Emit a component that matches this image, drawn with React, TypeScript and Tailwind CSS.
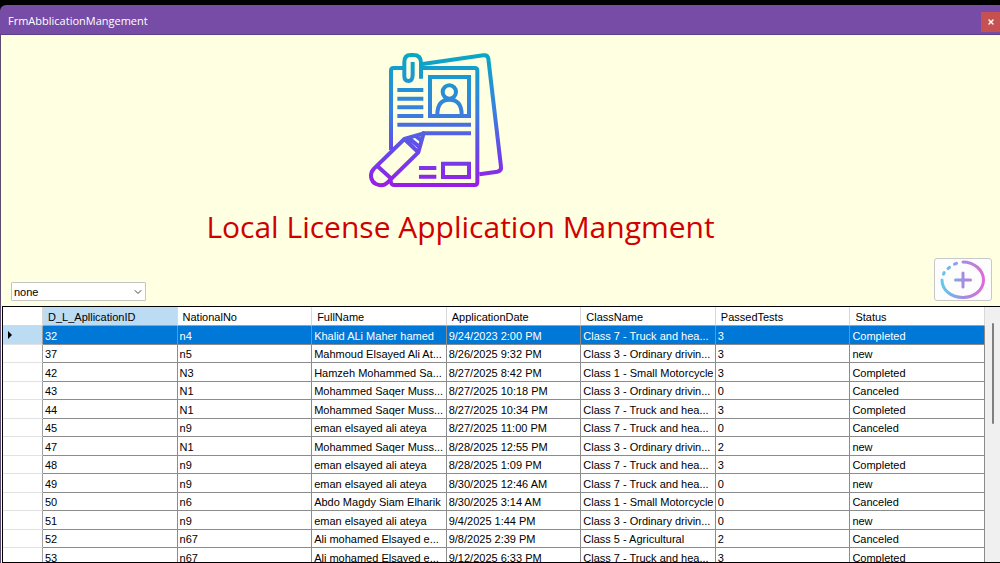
import { ChevronDown, X } from 'lucide-react'
import clsx from 'clsx'

type Application = {
  id: number
  nationalNo: string
  fullName: string
  date: string
  className: string
  passedTests: number
  status: 'new' | 'Completed' | 'Canceled'
}

const columns = [
  'D_L_ApllicationID',
  'NationalNo',
  'FullName',
  'ApplicationDate',
  'ClassName',
  'PassedTests',
  'Status',
]

const truck = 'Class 7 - Truck and hea...'
const ordinary = 'Class 3 - Ordinary drivin...'
const motorcycle = 'Class 1 - Small Motorcycle'

const applications: Application[] = [
  { id: 32, nationalNo: 'n4', fullName: 'Khalid ALi Maher hamed', date: '9/24/2023 2:00 PM', className: truck, passedTests: 3, status: 'Completed' },
  { id: 37, nationalNo: 'n5', fullName: 'Mahmoud Elsayed Ali At...', date: '8/26/2025 9:32 PM', className: ordinary, passedTests: 3, status: 'new' },
  { id: 42, nationalNo: 'N3', fullName: 'Hamzeh Mohammed Sa...', date: '8/27/2025 8:42 PM', className: motorcycle, passedTests: 3, status: 'Completed' },
  { id: 43, nationalNo: 'N1', fullName: 'Mohammed Saqer Muss...', date: '8/27/2025 10:18 PM', className: ordinary, passedTests: 0, status: 'Canceled' },
  { id: 44, nationalNo: 'N1', fullName: 'Mohammed Saqer Muss...', date: '8/27/2025 10:34 PM', className: truck, passedTests: 3, status: 'Completed' },
  { id: 45, nationalNo: 'n9', fullName: 'eman elsayed ali ateya', date: '8/27/2025 11:00 PM', className: truck, passedTests: 0, status: 'Canceled' },
  { id: 47, nationalNo: 'N1', fullName: 'Mohammed Saqer Muss...', date: '8/28/2025 12:55 PM', className: ordinary, passedTests: 2, status: 'new' },
  { id: 48, nationalNo: 'n9', fullName: 'eman elsayed ali ateya', date: '8/28/2025 1:09 PM', className: truck, passedTests: 3, status: 'Completed' },
  { id: 49, nationalNo: 'n9', fullName: 'eman elsayed ali ateya', date: '8/30/2025 12:46 AM', className: truck, passedTests: 0, status: 'new' },
  { id: 50, nationalNo: 'n6', fullName: 'Abdo Magdy Siam Elharik', date: '8/30/2025 3:14 AM', className: motorcycle, passedTests: 0, status: 'Canceled' },
  { id: 51, nationalNo: 'n9', fullName: 'eman elsayed ali ateya', date: '9/4/2025 1:44 PM', className: ordinary, passedTests: 0, status: 'new' },
  { id: 52, nationalNo: 'n67', fullName: 'Ali mohamed Elsayed e...', date: '9/8/2025 2:39 PM', className: 'Class 5 - Agricultural', passedTests: 2, status: 'Canceled' },
  { id: 53, nationalNo: 'n67', fullName: 'Ali mohamed Elsayed e...', date: '9/12/2025 6:33 PM', className: truck, passedTests: 3, status: 'Completed' },
]

function ApplicationIcon() {
  return (
    <svg viewBox="0 0 510 480" className="mr-[52px] h-[160px] w-[170px] shrink-0" fill="none" aria-hidden="true">
      <defs>
        <linearGradient id="ink" gradientUnits="userSpaceOnUse" x1="0" y1="40" x2="0" y2="440">
          <stop offset="0" stopColor="#06a9c4" />
          <stop offset="0.45" stopColor="#3b7ee0" />
          <stop offset="0.75" stopColor="#6a45e8" />
          <stop offset="1" stopColor="#9a1de6" />
        </linearGradient>
      </defs>
      <g stroke="url(#ink)" strokeWidth="12" strokeLinejoin="round">
        {/* back sheet */}
        <path d="M218 72 L400 46 Q413 44 415 56 L453 380 Q455 393 442 395 L388 403" />
        {/* front sheet */}
        <path d="M164 84 H131 Q123 84 123 92 V330 M218 84 H374 Q382 84 382 92 V427 Q382 435 374 435 H131 Q123 435 121 416" />
        {/* paper clip */}
        <path d="M188 66 V104 Q188 123 175 123 Q163 123 163 108 V66 Q163 45 182 45 H190 Q213 45 213 68 V116" />
        {/* portrait */}
        <path d="M240 111 H357 V228 H240 Z" strokeLinejoin="miter" />
        <circle cx="298" cy="156" r="20" />
        <path d="M262 224 C262 193 276 179 298 179 C321 179 335 193 335 224" />
        {/* text lines */}
        <path d="M142 150 H220 M142 176 H220 M142 202 H220 M142 228 H220 M142 254 H363 M216 280 H363 M207 384 H259 M207 410 H259" />
        <path d="M279 371 H357 V411 H279 Z" strokeLinejoin="miter" />
        {/* pencil */}
        <path d="M221 280 L163 297 L72 386 C57 402 62 424 78 432 C91 438 104 436 113 427 L205 337 Z" />
        <path d="M163 297 L205 337 M176 294 L210 322 M196 287 L214 301 M82 378 L124 416" />
      </g>
    </svg>
  )
}

function AddIcon() {
  return (
    <svg viewBox="0 0 48 42" className="h-[42px] w-12" fill="none" aria-hidden="true">
      <defs>
        <linearGradient id="ring" gradientUnits="userSpaceOnUse" x1="3" y1="0" x2="45" y2="0">
          <stop offset="0" stopColor="#62c8ec" />
          <stop offset="0.5" stopColor="#a08ee0" />
          <stop offset="1" stopColor="#de6ad8" />
        </linearGradient>
      </defs>
      <g stroke="url(#ring)" strokeWidth="3" strokeLinecap="round">
        <path d="M24 3 C35 3 44.500 11 44.500 21 C44.500 31 35 38.500 24 38.500 C12 38.500 3 31 3 21" />
        <path d="M4.500 15.200 L5.200 13.600 M9 9.600 L10.500 8.300 M15.500 5.200 L17.500 4.400" />
        <path d="M24 14 V28 M16.500 21 H31.500" />
      </g>
    </svg>
  )
}

function TitleBar() {
  return (
    <header className="flex h-[30px] shrink-0 items-center justify-between rounded-tl-md border-b border-[#5d4285] bg-[#774ca6] pl-2">
      <span className="pt-[2px] font-['Open_Sans','Noto_Sans',sans-serif] text-[11px] text-white">FrmAbblicationMangement</span>
      <button type="button" aria-label="Close" className="mt-[7px] flex h-5 w-[19px] items-center justify-center self-start bg-[#c75050] text-white">
        <X size={8} strokeWidth={4} />
      </button>
    </header>
  )
}

function ApplicationsTable() {
  return (
    <table className="w-full table-fixed border-separate border-spacing-0 bg-white text-left whitespace-nowrap">
      <thead>
        <tr className="h-[19px]">
          <th aria-label="Row selector" className="w-[40px] border-r border-b border-[#d8d8d8] p-0" />
          {columns.map((column, i) => (
            <th
              key={column}
              scope="col"
              className={clsx(
                'border-r border-b border-[#d8d8d8] border-b-[#a0a0a0] pt-[2px] pr-0 pb-0 pl-[5px] font-normal',
                i === 0 && 'bg-[#bcdcf4]',
              )}
            >
              {column}
            </th>
          ))}
        </tr>
      </thead>
      <tbody>
        {applications.map((app, i) => {
          const selected = i === 0
          const cell = 'overflow-hidden border-r border-b border-[#8c8c8c] pt-px pr-0 pb-0 pl-[2px]'
          return (
            <tr key={app.id} className={clsx('h-[18px] odd:h-[19px]', selected && 'bg-[#0078d7] text-white')}>
              <th
                scope="row"
                aria-label={`Application ${app.id}`}
                className={clsx('border-r border-b border-r-[#a0a0a0] border-b-[#e2e2e2] p-0 pl-[5px]', selected ? 'bg-[#bcdcf4]' : 'bg-white')}
              >
                {selected && (
                  <svg viewBox="0 0 4 8" className="h-2 w-1 fill-black" aria-hidden="true">
                    <path d="M0 0 L4 4 L0 8 Z" />
                  </svg>
                )}
              </th>
              <td className={cell}>{app.id}</td>
              <td className={cell}>{app.nationalNo}</td>
              <td className={cell}>{app.fullName}</td>
              <td className={cell}>{app.date}</td>
              <td className={cell}>{app.className}</td>
              <td className={cell}>{app.passedTests}</td>
              <td className={cell}>{app.status}</td>
            </tr>
          )
        })}
      </tbody>
    </table>
  )
}

export default function App() {
  return (
    <div className="flex h-screen flex-col overflow-hidden bg-black pt-[5px] font-['Liberation_Sans',Arial,sans-serif] text-[11px] leading-4 text-black">
      <TitleBar />
      <main className="flex min-h-0 flex-1 flex-col border-l border-[#5d4a70] bg-[#ffffe1]">
        <div className="flex w-[92%] shrink-0 flex-col items-center pt-[5px]">
          <ApplicationIcon />
          <h1 className="font-['Open_Sans','Noto_Sans',sans-serif] text-[30px] leading-[54px] text-[#d00000]">
            Local License Application Mangment
          </h1>
        </div>

        <div className="flex shrink-0 items-end justify-between pt-1 pr-2 pb-[5px] pl-[10px]">
          <div className="relative">
            <select
              aria-label="Filter by"
              className="h-[19px] w-[135px] appearance-none rounded-[1px] border border-[#c4c4c4] bg-white pt-px pl-[2px]"
            >
              <option>none</option>
            </select>
            <ChevronDown size={12} strokeWidth={2} className="pointer-events-none absolute top-1 right-[2px] text-[#444444]" />
          </div>
          <button
            type="button"
            aria-label="Add application"
            className="flex h-[43px] w-[58px] items-center justify-center rounded-[3px] border border-[#c8c8c8] bg-[#fdfdfd]"
          >
            <AddIcon />
          </button>
        </div>

        <section className="ml-px flex min-h-0 flex-1 overflow-hidden border-y border-l border-black bg-white">
          <div className="min-w-0 flex-1 overflow-hidden">
            <ApplicationsTable />
          </div>
          <div className="flex w-[15px] shrink-0 justify-center bg-[#f0f0f0] pt-4">
            <div className="h-[101px] w-[2px] rounded-full bg-[#808080]" />
          </div>
        </section>
      </main>
    </div>
  )
}
